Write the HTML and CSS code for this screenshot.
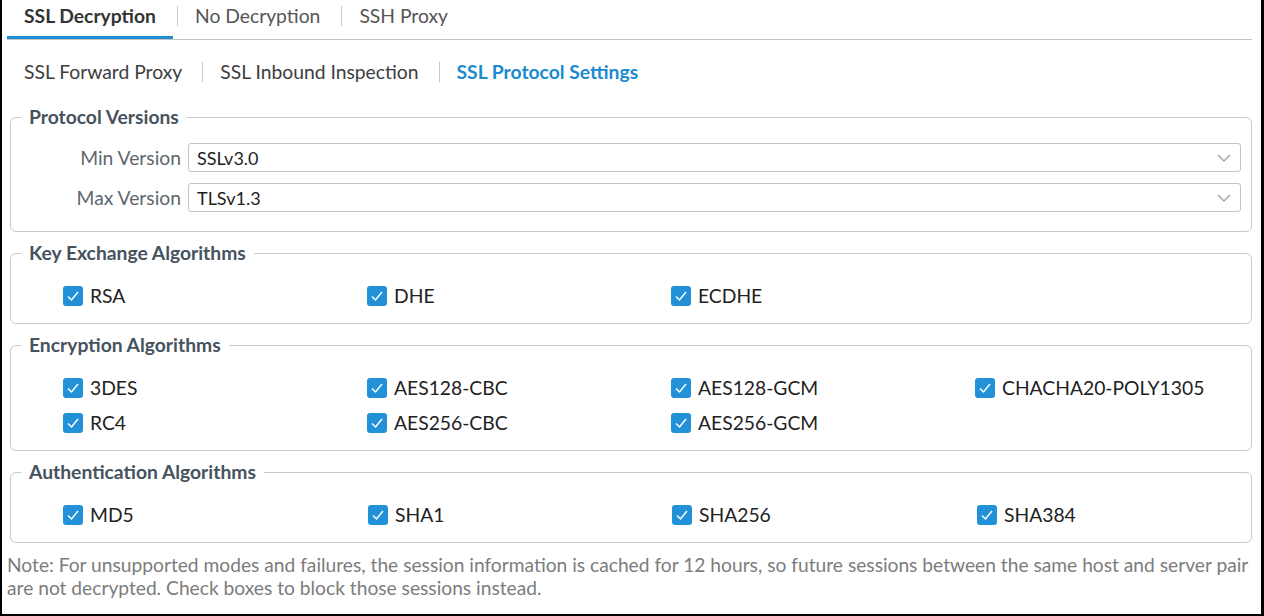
FILE: index.html
```html
<!DOCTYPE html>
<html lang="en">
<head>
<meta charset="utf-8">
<title>SSL Protocol Settings</title>
<link rel="stylesheet" href="styles.css">
</head>
<body>
<div class="frame">
  <div class="tabs">
    <div class="tab active">SSL Decryption</div>
    <span class="sep"></span>
    <div class="tab">No Decryption</div>
    <span class="sep"></span>
    <div class="tab">SSH Proxy</div>
  </div>

  <div class="subtabs">
    <div class="subtab">SSL Forward Proxy</div>
    <span class="subsep"></span>
    <div class="subtab">SSL Inbound Inspection</div>
    <span class="subsep"></span>
    <div class="subtab active">SSL Protocol Settings</div>
  </div>

  <fieldset class="group versions">
    <legend>Protocol Versions</legend>
    <div class="form-row">
      <label class="form-label">Min Version</label>
      <div class="select"><span class="select-value">SSLv3.0</span><span class="select-arrow"><svg width="14" height="8" viewBox="0 0 14 8"><polyline points="1,1 7,7 13,1" fill="none" stroke="#a0a0a0" stroke-width="1.4"/></svg></span></div>
    </div>
    <div class="form-row">
      <label class="form-label">Max Version</label>
      <div class="select"><span class="select-value">TLSv1.3</span><span class="select-arrow"><svg width="14" height="8" viewBox="0 0 14 8"><polyline points="1,1 7,7 13,1" fill="none" stroke="#a0a0a0" stroke-width="1.4"/></svg></span></div>
    </div>
  </fieldset>

  <fieldset class="group">
    <legend>Key Exchange Algorithms</legend>
    <div class="checks">
      <div class="check"><span class="cb"><svg width="20" height="20" viewBox="0 0 20 20"><polyline points="5,10.5 8.5,14 15,6" fill="none" stroke="#fff" stroke-width="1.5"/></svg></span>RSA</div>
      <div class="check"><span class="cb"><svg width="20" height="20" viewBox="0 0 20 20"><polyline points="5,10.5 8.5,14 15,6" fill="none" stroke="#fff" stroke-width="1.5"/></svg></span>DHE</div>
      <div class="check"><span class="cb"><svg width="20" height="20" viewBox="0 0 20 20"><polyline points="5,10.5 8.5,14 15,6" fill="none" stroke="#fff" stroke-width="1.5"/></svg></span>ECDHE</div>
    </div>
  </fieldset>

  <fieldset class="group">
    <legend>Encryption Algorithms</legend>
    <div class="checks">
      <div class="check"><span class="cb"><svg width="20" height="20" viewBox="0 0 20 20"><polyline points="5,10.5 8.5,14 15,6" fill="none" stroke="#fff" stroke-width="1.5"/></svg></span>3DES</div>
      <div class="check"><span class="cb"><svg width="20" height="20" viewBox="0 0 20 20"><polyline points="5,10.5 8.5,14 15,6" fill="none" stroke="#fff" stroke-width="1.5"/></svg></span>AES128-CBC</div>
      <div class="check"><span class="cb"><svg width="20" height="20" viewBox="0 0 20 20"><polyline points="5,10.5 8.5,14 15,6" fill="none" stroke="#fff" stroke-width="1.5"/></svg></span>AES128-GCM</div>
      <div class="check"><span class="cb"><svg width="20" height="20" viewBox="0 0 20 20"><polyline points="5,10.5 8.5,14 15,6" fill="none" stroke="#fff" stroke-width="1.5"/></svg></span>CHACHA20-POLY1305</div>
      <div class="check"><span class="cb"><svg width="20" height="20" viewBox="0 0 20 20"><polyline points="5,10.5 8.5,14 15,6" fill="none" stroke="#fff" stroke-width="1.5"/></svg></span>RC4</div>
      <div class="check"><span class="cb"><svg width="20" height="20" viewBox="0 0 20 20"><polyline points="5,10.5 8.5,14 15,6" fill="none" stroke="#fff" stroke-width="1.5"/></svg></span>AES256-CBC</div>
      <div class="check"><span class="cb"><svg width="20" height="20" viewBox="0 0 20 20"><polyline points="5,10.5 8.5,14 15,6" fill="none" stroke="#fff" stroke-width="1.5"/></svg></span>AES256-GCM</div>
    </div>
  </fieldset>

  <fieldset class="group">
    <legend>Authentication Algorithms</legend>
    <div class="checks auth">
      <div class="check"><span class="cb"><svg width="20" height="20" viewBox="0 0 20 20"><polyline points="5,10.5 8.5,14 15,6" fill="none" stroke="#fff" stroke-width="1.5"/></svg></span>MD5</div>
      <div class="check"><span class="cb"><svg width="20" height="20" viewBox="0 0 20 20"><polyline points="5,10.5 8.5,14 15,6" fill="none" stroke="#fff" stroke-width="1.5"/></svg></span>SHA1</div>
      <div class="check"><span class="cb"><svg width="20" height="20" viewBox="0 0 20 20"><polyline points="5,10.5 8.5,14 15,6" fill="none" stroke="#fff" stroke-width="1.5"/></svg></span>SHA256</div>
      <div class="check"><span class="cb"><svg width="20" height="20" viewBox="0 0 20 20"><polyline points="5,10.5 8.5,14 15,6" fill="none" stroke="#fff" stroke-width="1.5"/></svg></span>SHA384</div>
    </div>
  </fieldset>

  <p class="note">Note: For unsupported modes and failures, the session information is cached for 12 hours, so future sessions between the same host and server pair are not decrypted. Check boxes to block those sessions instead.</p>
</div>
</body>
</html>
```

FILE: styles.css
```css
* { box-sizing: border-box; }

html, body {
  margin: 0;
  padding: 0;
  background: #fff;
}

body {
  font-family: Lato, "Open Sans", "Liberation Sans", sans-serif;
  font-size: 19.3px;
  color: #2b2b2b;
}

.frame {
  width: 1264px;
  height: 616px;
  border-left: 2px solid #000;
  border-right: 3px solid #000;
  border-bottom: 2px solid #000;
  padding: 0 9px 0 0;
  overflow: hidden;
}

/* top tabs */
.tabs {
  display: flex;
  align-items: flex-start;
  margin-left: 5px;
  height: 40px;
  border-bottom: 1px solid #c4c4c4;
}

.tab {
  height: 39px;
  padding: 5px 17px 0;
  line-height: 22px;
  color: #555;
}

.tab.active {
  font-weight: 700;
  color: #333;
  border-bottom: 3px solid #1f8dd6;
}

.sep {
  width: 1px;
  height: 20px;
  margin: 6px 0 0 4px;
  background: #c9c9c9;
}

/* sub tabs */
.subtabs {
  display: flex;
  align-items: center;
  margin: 21px 0 23px 22px;
  line-height: 22px;
}

.subtab {
  color: #3d3d3d;
}

.subtab.active {
  font-weight: 700;
  color: #1b8ad0;
}

.subsep {
  width: 1px;
  height: 20px;
  background: #c9c9c9;
  margin: 0 17px 0 20px;
}

/* groups */
.group {
  margin: 10px 0 0 8px;
  padding: 14px 0 10px 0;
  border: 1px solid #c9c9c9;
  border-radius: 6px;
  min-width: 0;
}

.group.versions {
  margin-top: 0;
  padding: 15px 10px 19px 0;
}

.group legend {
  margin-left: 10px;
  padding: 0 8px;
  font-weight: 700;
  line-height: 22px;
  color: #46535e;
}

.form-row {
  display: flex;
  align-items: center;
  gap: 7px;
}

.form-row + .form-row {
  margin-top: 11px;
}

.form-label {
  width: 170px;
  text-align: right;
  color: #5d676f;
}

.select {
  flex: 1;
  display: flex;
  align-items: center;
  height: 29px;
  border: 1px solid #c3c3c3;
  border-radius: 3px;
  color: #1e1e1e;
}

.select-value {
  flex: 1;
  padding-left: 8px;
  font-size: 18px;
  line-height: 22px;
}

.select-arrow {
  width: 33px;
  display: flex;
  justify-content: center;
  align-items: center;
}

.select-arrow svg { display: block; }

/* checkboxes */
.checks {
  display: grid;
  grid-template-columns: repeat(4, 304px);
  grid-auto-rows: 35px;
  padding-left: 52px;
}

.checks.auth {
  grid-template-columns: 305px 304px 305px 304px;
}

.check {
  display: flex;
  align-items: center;
  gap: 7px;
  color: #222;
  line-height: 22px;
}

.cb {
  width: 20px;
  height: 20px;
  border-radius: 3px;
  background: #2391d8;
  flex: none;
}

.cb svg { display: block; }

.note {
  margin: 10px 0 0 5px;
  font-size: 19.2px;
  line-height: 23px;
  color: #7c7c7c;
}
```
